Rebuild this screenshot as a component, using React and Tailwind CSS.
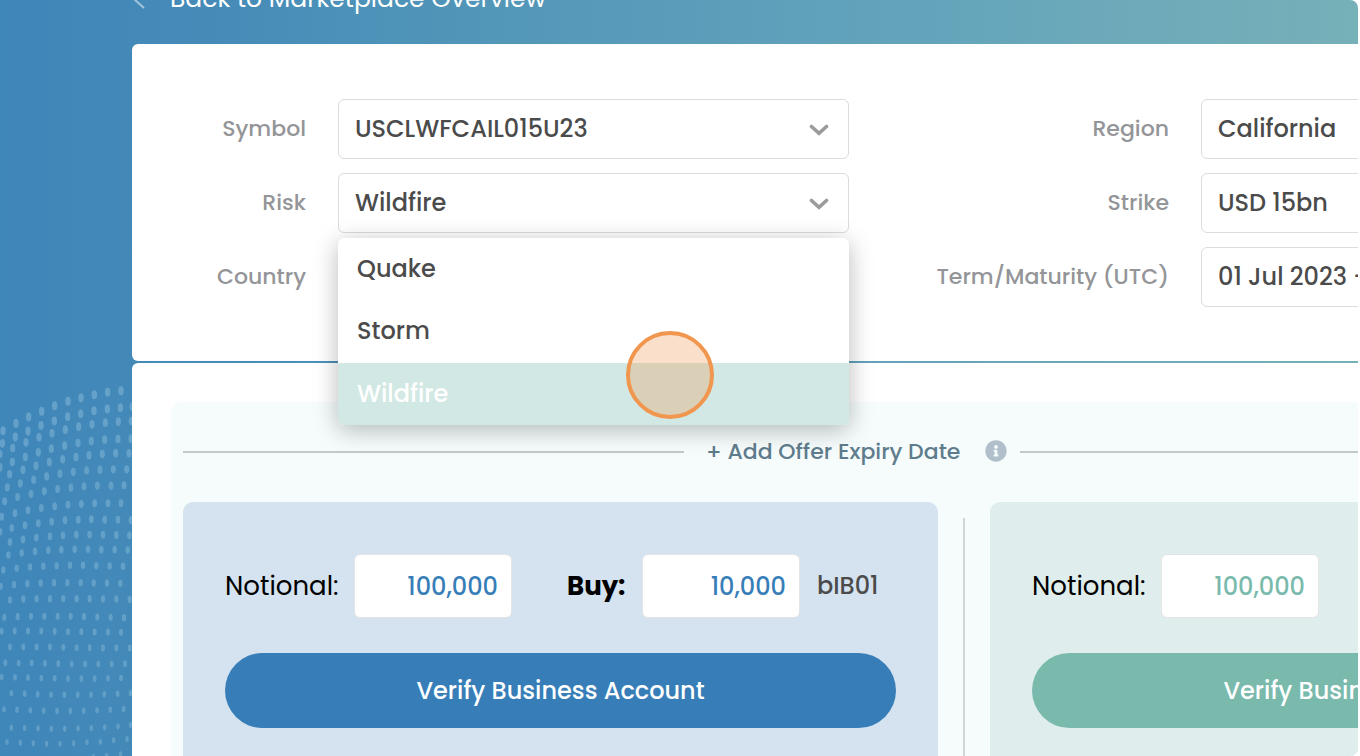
import { FaInfoCircle } from "react-icons/fa";

const DOT_ROWS = [
  [[9,152],[48,130],[86,110],[125,94],[164,77],[204,64],[243,53],[283,44],[323,37],[363,32]],
  [[7,190],[46,171],[84,153],[123,136],[163,123],[203,110],[242,101],[282,92],[322,87],[361,83],[397,80]],
  [[0,222],[38,204],[78,187],[117,172],[156,160],[196,149],[236,140],[276,133],[316,128],[355,125],[394,123]],
  [[0,262],[37,246],[76,231],[115,217],[154,206],[194,197],[234,189],[274,183],[314,179],[354,177],[393,176]],
  [[29,283],[69,269],[108,257],[148,246],[188,238],[228,231],[267,226],[307,222],[347,220],[387,220]],
  [[22,322],[61,310],[101,299],[140,289],[180,281],[220,276],[260,271],[300,269],[340,268],[380,268]],
  [[14,364],[53,351],[93,342],[133,334],[173,327],[213,323],[252,319],[292,317],[333,317],[372,316]],
  [[5,410],[45,400],[84,391],[124,384],[164,379],[204,374],[244,372],[284,370],[324,370],[363,370]],
  [[0,455],[35,444],[75,436],[115,430],[155,425],[195,421],[235,419],[274,418],[314,419],[354,419],[393,421]],
  [[30,486],[69,478],[109,473],[150,469],[189,466],[229,464],[269,464],[309,464],[349,465],[388,466]],
  [[25,525],[65,519],[105,514],[145,511],[184,509],[224,508],[264,508],[304,509],[344,509],[383,510]],
  [[10,570],[50,565],[90,561],[130,559],[170,557],[210,556],[249,556],[289,557],[329,558],[369,559]],
  [[2,619],[42,614],[82,611],[122,609],[162,608],[202,608],[242,608],[281,609],[321,609],[361,610]],
  [[30,660],[70,657],[110,656],[150,656],[190,656],[230,656],[269,656],[309,657],[349,657],[389,658]],
  [[13,712],[53,710],[93,709],[133,709],[173,709],[212,709],[252,710],[292,711],[332,712],[372,713]],
  [[5,754],[44,753],[84,753],[124,753],[164,754],[204,755],[244,755],[284,756],[324,756],[363,757]],
  [[30,801],[70,801],[110,801],[150,801],[190,802],[230,803],[269,803],[309,804],[349,804],[389,804]],
  [[16,848],[56,849],[95,849],[135,850],[175,851],[215,852],[255,852],[295,852],[335,852],[375,851]],
  [[5,891],[45,892],[84,893],[124,894],[164,895],[204,896],[244,896],[284,896],[324,895],[363,894]],
  [[34,940],[74,941],[113,943],[153,944],[193,944],[233,944],[273,944],[313,943],[353,941],[392,940]],
  [[12,988],[51,989],[91,991],[131,992],[171,993],[211,993],[251,992],[291,991],[331,989],[371,987]],
  [[34,1043],[74,1044],[114,1045],[154,1046],[194,1046],[234,1045],[274,1044],[314,1042],[354,1039],[392,1035]],
  [[21,1086],[61,1088],[100,1090],[140,1091],[180,1091],[221,1090],[261,1087],[301,1085],[341,1081],[381,1077]],
  [[280,1130],[320,1127],[362,1123]],
];

function DotWave() {
  return (
    <svg className="absolute left-0 top-[380px] h-[376px] w-[132px]" viewBox="0 0 396 1128" aria-hidden="true">
      {DOT_ROWS.map((row, r) =>
        row.map(([x, y], i) => (
          <ellipse key={`${r}-${i}`} cx={x} cy={y} rx={8.2 - r * 0.14} ry={13.5 - r * 0.2} fill="#8fc0dc" fillOpacity={0.46 - r * 0.003} />
        ))
      )}
    </svg>
  );
}

function Chevron() {
  return (
    <svg className="pointer-events-none absolute right-5 top-[25px] h-3 w-5" viewBox="0 0 20 12" fill="none" aria-hidden="true">
      <path d="M2.500 2.500 10 9.300l7.500-6.800" stroke="#9b9b9b" strokeWidth="3.600" strokeLinecap="round" />
    </svg>
  );
}

function Field({ id, label, options, children }) {
  return (
    <>
      <label htmlFor={id} className="pb-0.5 pr-8 text-right text-[22px] font-medium text-[#949598]">{label}</label>
      <div className="relative">
        <select id={id} className="block h-[60px] w-full appearance-none rounded-md border border-[#dcdcdc] bg-white pl-4 pr-12 text-2xl font-medium text-[#4b4b4b]">
          {options.map((o) => <option key={o}>{o}</option>)}
        </select>
        <Chevron />
        {children}
      </div>
    </>
  );
}

function RiskMenu() {
  const item = "flex flex-1 items-center pl-[19px]";
  return (
    <div className="absolute left-0 top-full z-10 mt-[5px] w-full">
      <ul role="listbox" aria-label="Risk" className="flex h-[187px] flex-col overflow-hidden rounded-md bg-white text-2xl font-medium text-[#4b4b4b] shadow-[0_5px_24px_rgba(0,0,0,0.28)]">
        <li role="option" aria-selected="false" className={item}>Quake</li>
        <li role="option" aria-selected="false" className={item}>Storm</li>
        <li role="option" aria-selected="true" className="flex flex-1 items-center bg-[#d2e8e4] pl-[19px] text-white">Wildfire</li>
      </ul>
      <div className="absolute left-[288px] top-[93px] size-[88px] rounded-full border-4 border-[#f0964e] bg-[#f0964e]/30" />
    </div>
  );
}

function OrderPanel({ id, side, panelClass, valueClass, buttonClass }) {
  const input = "h-16 w-[158px] shrink-0 rounded-md border border-[#e2e4e6] bg-white pr-[13px] text-right text-2xl font-medium";
  return (
    <section className={`rounded-[10px] px-[42px] pb-12 pt-[52px] ${panelClass}`}>
      <div className="flex items-center text-black">
        <label htmlFor={`${id}-notional`} className="w-[129px] shrink-0 text-[26px]">Notional:</label>
        <input id={`${id}-notional`} defaultValue="100,000" className={`${input} ${valueClass}`} />
        <label htmlFor={`${id}-amount`} className="ml-[55px] w-[75px] shrink-0 text-[26px] font-bold">{side}:</label>
        <input id={`${id}-amount`} defaultValue="10,000" className={`${input} ${valueClass}`} />
        <span className="pl-[17px] text-2xl font-medium text-[#4b4b4b]">bIB01</span>
      </div>
      <button className={`mt-[35px] h-[75px] w-full rounded-full text-2xl font-medium text-white ${buttonClass}`}>
        Verify Business Account
      </button>
    </section>
  );
}

export default function App() {
  return (
    <div className="h-screen overflow-hidden bg-white pr-0.5 font-['Poppins','Inter',sans-serif]">
      <div className="relative h-full overflow-hidden rounded-r-lg bg-[linear-gradient(90deg,#3f86b9_0%,#468bb8_15%,#5095b8_33%,#5b9cba_50%,#65a5bb_70%,#76b0b8_100%)]">
        <DotWave />
        <main className="relative -mr-[438px] ml-[132px] flex flex-col">
          <header className="flex h-11 items-start">
            <a href="#overview" className="-mt-[21px] flex h-10 items-center text-[25px] leading-10 text-white">
              <svg className="h-5 w-[22px] opacity-50" viewBox="0 0 22 20" fill="none" stroke="currentColor" strokeWidth="2" aria-hidden="true">
                <path d="M12 1 2 10l10 9M2 10h19" />
              </svg>
              <span className="pl-4">Back to Marketplace Overview</span>
            </a>
          </header>

          <form className="grid grid-cols-[206px_1fr_352px_1fr] items-center gap-y-3.5 rounded-md bg-white pb-[54px] pr-[84px] pt-[55px]">
            <Field id="symbol" label="Symbol" options={["USCLWFCAIL015U23"]} />
            <Field id="region" label="Region" options={["California"]} />
            <Field id="risk" label="Risk" options={["Wildfire"]}><RiskMenu /></Field>
            <Field id="strike" label="Strike" options={["USD 15bn"]} />
            <Field id="country" label="Country" options={["USA"]} />
            <Field id="term" label="Term/Maturity (UTC)" options={["01 Jul 2023 - 30 Sep 2023"]} />
          </form>

          <div className="mt-0.5 rounded-md bg-white px-[39px] pb-10 pt-[39px]">
            <div className="rounded-[10px] bg-[#f6fcfc] px-3 pb-3">
              <div className="grid h-[100px] grid-cols-[501fr_336px_725fr] items-center">
                <hr className="h-0.5 border-0 bg-[#c1c9c9]" />
                <button className="flex items-center justify-between pb-0.5 pl-[22px] pr-[13px] text-[22px] font-medium text-[#5f7c8d]">
                  + Add Offer Expiry Date
                  <FaInfoCircle className="size-[22px] text-[#b0bfca]" />
                </button>
                <hr className="h-0.5 border-0 bg-[#c1c9c9]" />
              </div>
              <div className="grid grid-cols-[1fr_52px_1fr]">
                <OrderPanel id="buy" side="Buy" panelClass="bg-[#d4e3ef]" valueClass="text-[#377eb8]" buttonClass="bg-[#377eb8]" />
                <div className="mt-4 w-0.5 justify-self-center bg-[#cfd6d6]" />
                <OrderPanel id="sell" side="Sell" panelClass="bg-[#dfeeec]" valueClass="text-[#7abaad]" buttonClass="bg-[#7abaad]" />
              </div>
            </div>
          </div>
        </main>
      </div>
    </div>
  );
}
